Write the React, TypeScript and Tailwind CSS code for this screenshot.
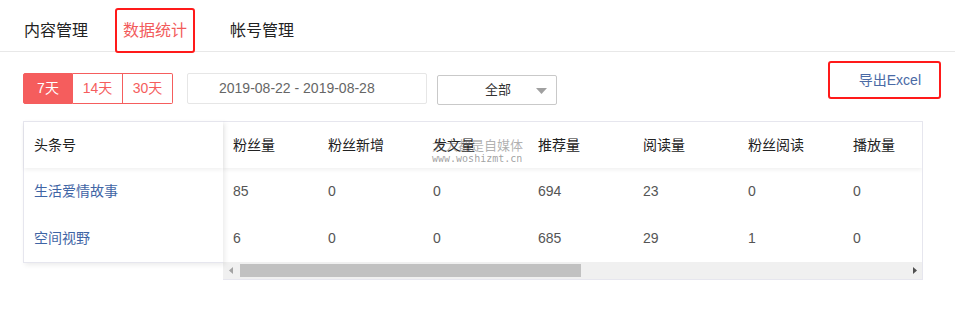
import React from "react";

const cols = ["粉丝量", "粉丝新增", "发文量", "推荐量", "阅读量", "粉丝阅读", "播放量"];
const widths = ["w-[95px]", "w-[105px]", "w-[105px]", "w-[105px]", "w-[105px]", "w-[105px]", "w-[105px]"];
const rows = [
  { name: "生活爱情故事", vals: ["85", "0", "0", "694", "23", "0", "0"] },
  { name: "空间视野", vals: ["6", "0", "0", "685", "29", "1", "0"] },
];

export default function App() {
  return (
    <div className="relative w-[955px] h-[310px] bg-white overflow-hidden text-[#333]" style={{ fontFamily: '"Liberation Sans", "Noto Sans CJK SC", sans-serif' }}>
      {/* Tabs */}
      <div className="flex items-center h-[52px] pt-[10px] border-b border-[#e8e8e8] pl-[24px] text-[16px]">
        <div className="text-[#222]">内容管理</div>
        <div className="ml-[27px] flex items-center justify-center w-[80px] h-[45px] border-[2.5px] border-[#ff1a1a] rounded-[3px] text-[#f25b5b]">数据统计</div>
        <div className="ml-[35px] text-[#222]">帐号管理</div>
      </div>

      {/* Filters */}
      <div className="flex items-start mt-[9px] pl-[23px] pr-[14px]">
        <div className="flex mt-[12px] text-[14px]">
          <div className="w-[50px] h-[31px] flex items-center justify-center bg-[#f55d5d] text-white rounded-l-[2px] border border-[#f55d5d]">7天</div>
          <div className="w-[50px] h-[31px] flex items-center justify-center border-y border-r border-[#f55d5d] text-[#f55d5d]">14天</div>
          <div className="w-[50px] h-[31px] flex items-center justify-center border-y border-r border-[#f55d5d] text-[#f55d5d] rounded-r-[2px]">30天</div>
        </div>
        <div className="ml-[14px] mt-[12px] w-[240px] h-[31px] border border-[#e6e6e6] rounded-[2px] flex items-center pl-[31px] text-[14px] text-[#666]">2019-08-22 - 2019-08-28</div>
        <div className="ml-[10px] mt-[14px] w-[120px] h-[30px] border border-[#c9c9c9] rounded-[2px] flex items-center text-[13px] text-[#333] relative">
          <span className="ml-[47px]">全部</span>
          <svg className="absolute left-[98px] top-[12px]" width="11" height="6" viewBox="0 0 11 6"><path d="M0 0 L11 0 L5.5 6 Z" fill="#a0a0a0" /></svg>
        </div>
        <div className="ml-auto w-[113px] h-[38px] border-[2.5px] border-[#ff1a1a] rounded-[3px] flex items-center justify-end pr-[18px] text-[14px] text-[#4a6aa5]">导出Excel</div>
      </div>

      {/* Table */}
      <div className="ml-[23px] mt-[16px] w-[900px] relative flex items-start">
        {/* fixed column */}
        <div className="w-[200px] shrink-0 relative z-10 bg-white border-l border-t border-b border-[#e6e6ee] shadow-[2px_2px_5px_rgba(0,0,0,0.08)]">
          <div className="h-[46px] flex items-center pl-[10px] text-[14px] text-[#222] shadow-[0_2px_4px_rgba(0,0,0,0.06)]">头条号</div>
          <div className="h-[47px] flex items-center pl-[10px] text-[14px] text-[#3f65a5]">生活爱情故事</div>
          <div className="h-[47px] flex items-center pl-[10px] text-[14px] text-[#3f65a5]">空间视野</div>
        </div>
        {/* scroll area */}
        <div className="flex-1 min-w-0 overflow-hidden border-t border-r border-b border-[#e6e6ee]">
          <div className="flex h-[46px] shadow-[0_2px_4px_rgba(0,0,0,0.06)] relative">
            {cols.map((c, i) => (
              <div key={c} className={`${widths[i]} shrink-0 flex items-center pl-[10px] text-[14px] text-[#222]`}>{c}</div>
            ))}
          </div>
          {rows.map((r) => (
            <div key={r.name} className="flex h-[47px]">
              {r.vals.map((v, i) => (
                <div key={i} className={`${widths[i]} shrink-0 flex items-center pl-[10px] text-[14px] text-[#555]`}>{v}</div>
              ))}
            </div>
          ))}
          {/* scrollbar */}
          <div className="h-[17px] bg-[#f0f0f0] flex items-center relative">
            <svg className="absolute left-[6px] top-[5px]" width="4" height="7" viewBox="0 0 4 7"><path d="M4 0 L0 3.5 L4 7 Z" fill="#a3a3a3" /></svg>
            <div className="ml-[17px] w-[341px] h-[13px] bg-[#c1c1c1]" />
            <svg className="absolute right-[5px] top-[5px]" width="4" height="7" viewBox="0 0 4 7"><path d="M0 0 L4 3.5 L0 7 Z" fill="#505050" /></svg>
          </div>
        </div>
        {/* watermark */}
        <div className="absolute left-[409px] top-[17px] z-20 leading-none pointer-events-none">
          <div className="text-[13px] text-[rgba(110,110,110,0.55)]" style={{ fontFamily: '"Noto Sans CJK SC", sans-serif' }}>大大都是自媒体</div>
          <div className="mt-[3px] text-[10px] text-[rgba(110,110,110,0.65)]" style={{ fontFamily: '"DejaVu Sans Mono", monospace' }}>www.woshizmt.cn</div>
        </div>
      </div>
    </div>
  );
}
